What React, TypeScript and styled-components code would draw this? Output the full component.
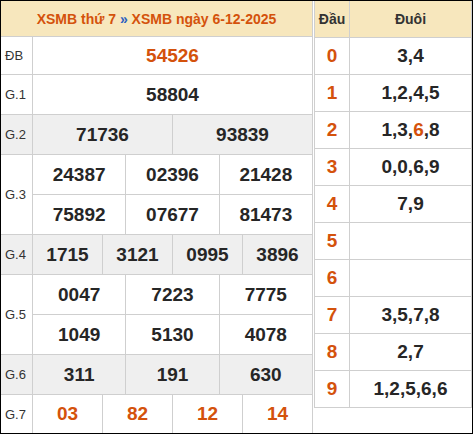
import React from "react";
import styled, { createGlobalStyle } from "styled-components";

const GlobalStyle = createGlobalStyle`
  html, body { margin: 0; padding: 0; background: #fff; }
  * { box-sizing: border-box; }
`;

const ORANGE = "#d4520c";
const BEIGE = "#f7e7bd";
const LINE = "#cfcfcf";
const DARK = "#262626";

const Frame = styled.div`
  width: 473px;
  height: 434px;
  border: 1px solid #000;
  display: flex;
  gap: 1px;
  overflow: hidden;
  font-family: "Liberation Sans", Arial, sans-serif;
`;

const LeftPanel = styled.div`
  width: 312px;
  display: flex;
  flex-direction: column;
`;

const Title = styled.div`
  height: 36px;
  background: ${BEIGE};
  border-bottom: 1px solid ${LINE};
  border-right: 1px solid ${LINE};
  display: flex;
  align-items: center;
  justify-content: center;
  font-size: 14px;
  font-weight: bold;
  color: ${ORANGE};
  white-space: pre;
`;

const Sep = styled.span`
  color: #2a5fc0;
`;

const PrizeRow = styled.div<{ $gray?: boolean; $last?: boolean }>`
  display: flex;
  background: ${(p) => (p.$gray ? "#efefef" : "#fff")};
  border-bottom: ${(p) => (p.$last ? "none" : `1px solid ${LINE}`)};
`;

const Label = styled.div`
  width: 32px;
  flex: none;
  border-right: 1px solid ${LINE};
  display: flex;
  align-items: center;
  padding-left: 4px;
  font-size: 13px;
  color: #333;
`;

const Lines = styled.div`
  flex: 1;
  display: flex;
  flex-direction: column;
`;

const Line = styled.div<{ $h: number; $divider?: boolean }>`
  height: ${(p) => p.$h}px;
  display: flex;
  border-bottom: ${(p) => (p.$divider ? `1px solid ${LINE}` : "none")};
  box-sizing: content-box;
`;

const Num = styled.div<{ $accent?: boolean }>`
  flex: 1 1 0;
  border-right: 1px solid ${LINE};
  display: flex;
  align-items: center;
  justify-content: center;
  font-size: 19px;
  font-weight: bold;
  color: ${(p) => (p.$accent ? ORANGE : DARK)};
`;

const RightPanel = styled.div`
  width: 158px;
  align-self: flex-start;
  border-left: 1px solid ${LINE};
  border-right: 1px solid ${LINE};
  display: flex;
  flex-direction: column;
`;

const LotoRow = styled.div<{ $head?: boolean }>`
  height: 37px;
  display: flex;
  border-bottom: 1px solid ${LINE};
  background: ${(p) => (p.$head ? BEIGE : "#fff")};
`;

const HeadCell = styled.div<{ $title?: boolean }>`
  width: 35px;
  flex: none;
  border-right: 1px solid ${LINE};
  display: flex;
  align-items: center;
  justify-content: center;
  font-weight: bold;
  font-size: ${(p) => (p.$title ? "14px" : "19px")};
  color: ${(p) => (p.$title ? "#333" : ORANGE)};
`;

const TailCell = styled.div<{ $title?: boolean }>`
  flex: 1;
  display: flex;
  align-items: center;
  justify-content: center;
  font-weight: bold;
  font-size: ${(p) => (p.$title ? "14px" : "19px")};
  color: ${(p) => (p.$title ? "#333" : DARK)};
  white-space: pre;
`;

const Hi = styled.span`
  color: ${ORANGE};
`;

type Prize = {
  label: string;
  lines: string[][];
  gray?: boolean;
  accent?: boolean;
  heights: number[];
};

const prizes: Prize[] = [
  { label: "ĐB", lines: [["54526"]], accent: true, heights: [37] },
  { label: "G.1", lines: [["58804"]], heights: [39] },
  { label: "G.2", lines: [["71736", "93839"]], gray: true, heights: [39] },
  {
    label: "G.3",
    lines: [
      ["24387", "02396", "21428"],
      ["75892", "07677", "81473"],
    ],
    heights: [39, 39],
  },
  { label: "G.4", lines: [["1715", "3121", "0995", "3896"]], gray: true, heights: [39] },
  {
    label: "G.5",
    lines: [
      ["0047", "7223", "7775"],
      ["1049", "5130", "4078"],
    ],
    heights: [39, 39],
  },
  { label: "G.6", lines: [["311", "191", "630"]], gray: true, heights: [39] },
  { label: "G.7", lines: [["03", "82", "12", "14"]], accent: true, heights: [38] },
];

const loto: { head: string; tails: React.ReactNode }[] = [
  { head: "0", tails: "3,4" },
  { head: "1", tails: "1,2,4,5" },
  {
    head: "2",
    tails: (
      <>
        1,3,<Hi>6</Hi>,8
      </>
    ),
  },
  { head: "3", tails: "0,0,6,9" },
  { head: "4", tails: "7,9" },
  { head: "5", tails: "" },
  { head: "6", tails: "" },
  { head: "7", tails: "3,5,7,8" },
  { head: "8", tails: "2,7" },
  { head: "9", tails: "1,2,5,6,6" },
];

export default function App() {
  return (
    <>
      <GlobalStyle />
      <Frame>
        <LeftPanel>
          <Title>
            XSMB thứ 7 <Sep>»</Sep> XSMB ngày 6-12-2025
          </Title>
          {prizes.map((p, i) => (
            <PrizeRow key={p.label} $gray={p.gray} $last={i === prizes.length - 1}>
              <Label>{p.label}</Label>
              <Lines>
                {p.lines.map((line, li) => (
                  <Line key={li} $h={p.heights[li]} $divider={li < p.lines.length - 1}>
                    {line.map((n, ni) => (
                      <Num key={ni} $accent={p.accent}>
                        {n}
                      </Num>
                    ))}
                  </Line>
                ))}
              </Lines>
            </PrizeRow>
          ))}
        </LeftPanel>
        <RightPanel>
          <LotoRow $head>
            <HeadCell $title>Đầu</HeadCell>
            <TailCell $title>Đuôi</TailCell>
          </LotoRow>
          {loto.map((r) => (
            <LotoRow key={r.head}>
              <HeadCell>{r.head}</HeadCell>
              <TailCell>{r.tails}</TailCell>
            </LotoRow>
          ))}
        </RightPanel>
      </Frame>
    </>
  );
}
